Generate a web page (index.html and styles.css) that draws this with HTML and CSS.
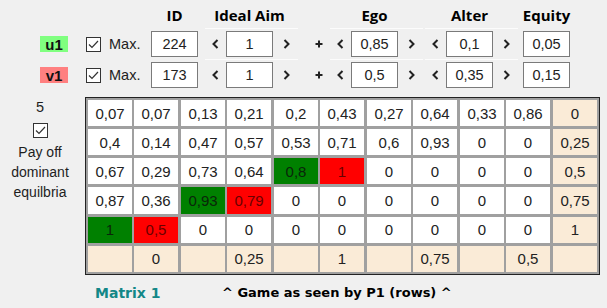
FILE: index.html
```html
<!DOCTYPE html>
<html>
<head>
<meta charset="utf-8">
<link rel="stylesheet" href="styles.css">
</head>
<body>
<div class="controls">
  <div class="crow hdr">
    <div class="h">ID</div>
    <div class="hg"><div class="h">Ideal Aim</div></div>
    <div class="hsp"></div>
    <div class="hg"><div class="h">Ego</div></div>
    <div class="hg hg2"><div class="h">Alter</div></div>
    <div class="h heq">Equity</div>
  </div>
  <div class="crow">
    <div class="tag u">u1</div>
    <svg class="chk" viewBox="0 0 15 15"><rect x="0.5" y="0.5" width="14" height="14" fill="#fff" stroke="#333"/><polyline points="3,7.5 6,10.5 12,4" fill="none" stroke="#333" stroke-width="1.2"/></svg>
    <div class="max">Max.</div>
    <div class="inp">224</div>
    <div class="grp">
      <svg class="arr" viewBox="0 0 7 10"><polyline points="5.5,1 1.5,5 5.5,9" fill="none" stroke="#222" stroke-width="2"/></svg>
      <div class="inp">1</div>
      <svg class="arr r" viewBox="0 0 7 10"><polyline points="1.5,1 5.5,5 1.5,9" fill="none" stroke="#222" stroke-width="2"/></svg>
    </div>
    <svg class="plus" viewBox="0 0 8 8"><path d="M4 0.5V7.5M0.5 4H7.5" stroke="#222" stroke-width="2"/></svg>
    <div class="grp">
      <svg class="arr" viewBox="0 0 7 10"><polyline points="5.5,1 1.5,5 5.5,9" fill="none" stroke="#222" stroke-width="2"/></svg>
      <div class="inp">0,85</div>
      <svg class="arr r" viewBox="0 0 7 10"><polyline points="1.5,1 5.5,5 1.5,9" fill="none" stroke="#222" stroke-width="2"/></svg>
    </div>
    <div class="grp g2">
      <svg class="arr" viewBox="0 0 7 10"><polyline points="5.5,1 1.5,5 5.5,9" fill="none" stroke="#222" stroke-width="2"/></svg>
      <div class="inp">0,1</div>
      <svg class="arr r" viewBox="0 0 7 10"><polyline points="1.5,1 5.5,5 1.5,9" fill="none" stroke="#222" stroke-width="2"/></svg>
    </div>
    <div class="inp eq">0,05</div>
  </div>
  <div class="crow">
    <div class="tag v">v1</div>
    <svg class="chk" viewBox="0 0 15 15"><rect x="0.5" y="0.5" width="14" height="14" fill="#fff" stroke="#333"/><polyline points="3,7.5 6,10.5 12,4" fill="none" stroke="#333" stroke-width="1.2"/></svg>
    <div class="max">Max.</div>
    <div class="inp">173</div>
    <div class="grp">
      <svg class="arr" viewBox="0 0 7 10"><polyline points="5.5,1 1.5,5 5.5,9" fill="none" stroke="#222" stroke-width="2"/></svg>
      <div class="inp">1</div>
      <svg class="arr r" viewBox="0 0 7 10"><polyline points="1.5,1 5.5,5 1.5,9" fill="none" stroke="#222" stroke-width="2"/></svg>
    </div>
    <svg class="plus" viewBox="0 0 8 8"><path d="M4 0.5V7.5M0.5 4H7.5" stroke="#222" stroke-width="2"/></svg>
    <div class="grp">
      <svg class="arr" viewBox="0 0 7 10"><polyline points="5.5,1 1.5,5 5.5,9" fill="none" stroke="#222" stroke-width="2"/></svg>
      <div class="inp">0,5</div>
      <svg class="arr r" viewBox="0 0 7 10"><polyline points="1.5,1 5.5,5 1.5,9" fill="none" stroke="#222" stroke-width="2"/></svg>
    </div>
    <div class="grp g2">
      <svg class="arr" viewBox="0 0 7 10"><polyline points="5.5,1 1.5,5 5.5,9" fill="none" stroke="#222" stroke-width="2"/></svg>
      <div class="inp">0,35</div>
      <svg class="arr r" viewBox="0 0 7 10"><polyline points="1.5,1 5.5,5 1.5,9" fill="none" stroke="#222" stroke-width="2"/></svg>
    </div>
    <div class="inp eq">0,15</div>
  </div>
</div>

<div class="main">
  <div class="side">
    <div class="num">5</div>
    <svg class="chk schk" viewBox="0 0 15 15"><rect x="0.5" y="0.5" width="14" height="14" fill="#fff" stroke="#333"/><polyline points="3,7.5 6,10.5 12,4" fill="none" stroke="#333" stroke-width="1.2"/></svg>
    <div class="stxt">Pay off<br>dominant<br>equilbria</div>
  </div>
  <div class="matrix">
    <div class="c">0,07</div><div class="c">0,07</div><div class="c">0,13</div><div class="c">0,21</div><div class="c">0,2</div><div class="c">0,43</div><div class="c">0,27</div><div class="c">0,64</div><div class="c">0,33</div><div class="c">0,86</div><div class="c p">0</div>
    <div class="c">0,4</div><div class="c">0,14</div><div class="c">0,47</div><div class="c">0,57</div><div class="c">0,53</div><div class="c">0,71</div><div class="c">0,6</div><div class="c">0,93</div><div class="c">0</div><div class="c">0</div><div class="c p">0,25</div>
    <div class="c">0,67</div><div class="c">0,29</div><div class="c">0,73</div><div class="c">0,64</div><div class="c g">0,8</div><div class="c r">1</div><div class="c">0</div><div class="c">0</div><div class="c">0</div><div class="c">0</div><div class="c p">0,5</div>
    <div class="c">0,87</div><div class="c">0,36</div><div class="c g">0,93</div><div class="c r">0,79</div><div class="c">0</div><div class="c">0</div><div class="c">0</div><div class="c">0</div><div class="c">0</div><div class="c">0</div><div class="c p">0,75</div>
    <div class="c g">1</div><div class="c r">0,5</div><div class="c">0</div><div class="c">0</div><div class="c">0</div><div class="c">0</div><div class="c">0</div><div class="c">0</div><div class="c">0</div><div class="c">0</div><div class="c p">1</div>
    <div class="c p"></div><div class="c p">0</div><div class="c p"></div><div class="c p">0,25</div><div class="c p"></div><div class="c p">1</div><div class="c p"></div><div class="c p">0,75</div><div class="c p"></div><div class="c p">0,5</div><div class="c p"></div>
  </div>
</div>

<div class="caption">
  <div class="mtx">Matrix 1</div>
  <div class="game">^ Game as seen by P1 (rows) ^</div>
</div>
</body>
</html>
```

FILE: styles.css
```css
html, body {
  margin: 0;
  padding: 0;
}
body {
  background: #f0f0f0;
  font-family: "Liberation Sans", Arial, sans-serif;
  color: #1e1e1e;
  width: 607px;
  height: 308px;
  overflow: hidden;
}

.controls {
  padding-top: 4px;
}
.crow {
  display: flex;
  align-items: center;
  height: 26px;
  margin-top: 5px;
}
.crow.hdr {
  height: 22px;
  margin-top: 0;
  padding-left: 151px;
  font-family: "Open Sans", sans-serif;
  font-weight: 700;
  font-size: 15px;
  color: #000;
}
.h {
  width: 47px;
  display: flex;
  justify-content: center;
  white-space: nowrap;
}
.hg {
  margin-left: 7px;
  width: 93px;
  box-sizing: border-box;
  padding-left: 21px;
  display: flex;
}
.hg2 {
  margin-left: 2px;
}
.hsp {
  width: 25px;
}
.heq {
  margin-left: 5px;
}

.tag {
  margin-left: 40px;
  width: 28px;
  height: 16px;
  display: flex;
  align-items: center;
  justify-content: center;
  font-weight: 700;
  font-size: 15px;
  color: #111;
}
.tag.u { background: #80ff80; }
.tag.v { background: #ff8080; }

.chk {
  width: 15px;
  height: 15px;
  margin-left: 18px;
  flex: none;
}
.max {
  margin-left: 8px;
  width: 42px;
  font-size: 14.5px;
  color: #222;
}
.inp {
  width: 47px;
  height: 26px;
  box-sizing: border-box;
  border: 1px solid #7a7a7a;
  background: #fff;
  display: flex;
  align-items: center;
  justify-content: center;
  font-size: 14.5px;
  color: #222;
  flex: none;
}
.grp {
  margin-left: 7px;
  margin-top: -3px;
  width: 93px;
  height: 29px;
  box-sizing: border-box;
  padding-left: 7px;
  padding-top: 2px;
  border-top: 1px solid #fcfcfc;
  display: flex;
  align-items: center;
}
.grp.g2 {
  margin-left: 2px;
}
.grp .inp {
  margin-left: 7px;
}
.arr {
  width: 7px;
  height: 10px;
  flex: none;
}
.arr.r {
  margin-left: 10px;
}
.plus {
  width: 8px;
  height: 8px;
  margin-left: 17px;
  flex: none;
}
.inp.eq {
  margin-left: 5px;
}

.main {
  display: flex;
  margin-top: 9px;
}
.side {
  width: 80px;
  margin-right: 5px;
  display: flex;
  flex-direction: column;
  align-items: center;
  color: #1e1e1e;
}
.num {
  font-size: 14.5px;
  line-height: 20px;
}
.schk {
  margin-left: 0;
  margin-top: 6px;
}
.stxt {
  margin-top: 4px;
  font-size: 14px;
  line-height: 20px;
  text-align: center;
}

.matrix {
  display: grid;
  grid-template-columns: repeat(5, 44px 45px) 44px;
  grid-template-rows: repeat(6, 1fr);
  column-gap: 2px;
  row-gap: 3px;
  height: 172px;
  padding: 2px;
  border: 1px solid #222;
  background: #a0a0a0;
}
.c {
  background: #fff;
  display: flex;
  align-items: center;
  justify-content: center;
  font-size: 15px;
  color: #222;
}
.matrix > .c:nth-child(11n+2),
.matrix > .c:nth-child(11n+4),
.matrix > .c:nth-child(11n+6),
.matrix > .c:nth-child(11n+8),
.matrix > .c:nth-child(11n+10) {
  margin-right: 1px;
}
.c.p { background: #faebd7; }
.c.g { background: #008000; color: #0a260a; }
.c.r { background: #ff0000; color: #6a0000; }

.caption {
  display: flex;
  align-items: center;
  padding-left: 95px;
  margin-top: 9px;
  font-family: "DejaVu Sans", sans-serif;
  font-weight: 700;
  line-height: 18px;
}
.mtx {
  width: 127px;
  font-size: 14px;
  color: #138787;
}
.game {
  font-size: 13px;
  color: #000;
}
```
